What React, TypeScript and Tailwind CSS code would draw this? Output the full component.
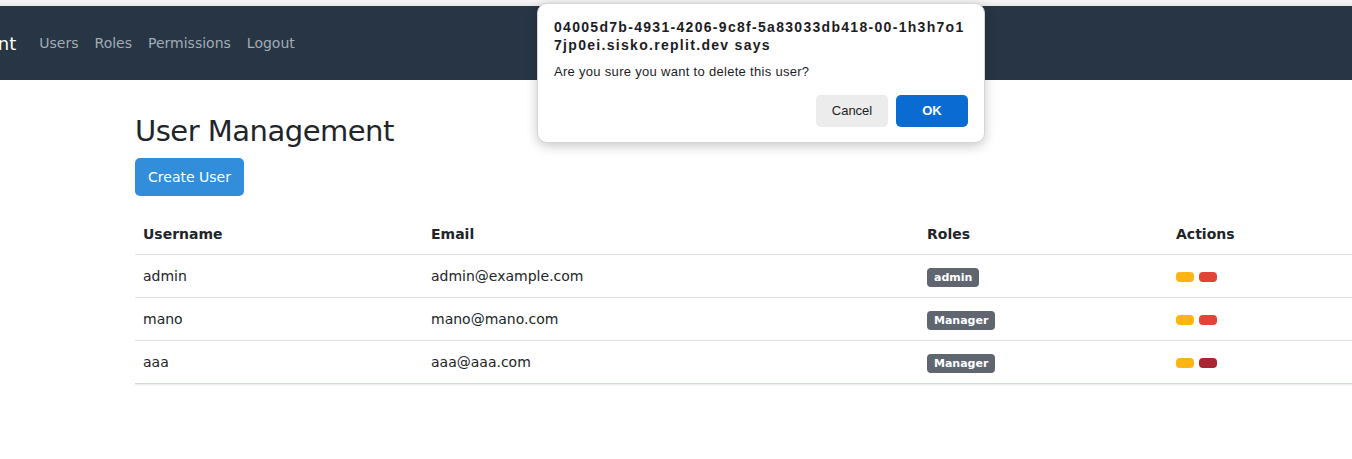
import React from "react";

const users = [
  { username: "admin", email: "admin@example.com", role: "admin", deleteColor: "bg-[#e24537]" },
  { username: "mano", email: "mano@mano.com", role: "Manager", deleteColor: "bg-[#e24537]" },
  { username: "aaa", email: "aaa@aaa.com", role: "Manager", deleteColor: "bg-[#a82633]" },
];

const navLinks = ["Users", "Roles", "Permissions", "Logout"];

function ConfirmDialog() {
  return (
    <div className="absolute left-[537px] top-[3px] w-[448px] rounded-[10px] bg-white border border-[#d6d6d6] shadow-[0_3px_12px_rgba(0,0,0,0.22)] px-4 pt-[14px] pb-[15px] font-['Liberation_Sans',Arial,sans-serif] text-[#1d1d1f]">
      <div className="text-[14px] font-bold leading-[18px] tracking-[1.3px]">
        <div>04005d7b-4931-4206-9c8f-5a83033db418-00-1h3h7o1</div>
        <div>7jp0ei.sisko.replit.dev says</div>
      </div>
      <p className="mt-[10px] text-[13px] leading-[16px] tracking-[0.3px]">
        Are you sure you want to delete this user?
      </p>
      <div className="mt-[15px] flex justify-end gap-2">
        <button className="w-[72px] h-[32px] rounded-[5px] bg-[#ececec] text-[13px] text-[#1d1d1f]">
          Cancel
        </button>
        <button className="w-[72px] h-[32px] rounded-[5px] bg-[#0a6cd2] text-[13px] font-bold text-white">
          OK
        </button>
      </div>
    </div>
  );
}

export default function App() {
  return (
    <div className="relative w-[1352px] h-[459px] overflow-hidden bg-white font-['DejaVu_Sans',Verdana,sans-serif] text-[#212529]">
      {/* browser chrome strip */}
      <div className="h-[6px] bg-gradient-to-b from-[#f6f6f6] to-[#e8e8e8]" />

      {/* Navbar */}
      <nav className="h-[74px] bg-[#273545] flex items-center">
        <span className="ml-[-149px] mr-[15px] text-[18px] text-white whitespace-nowrap">User Management</span>
        <ul className="flex">
          {navLinks.map((link) => (
            <li key={link} className="px-2 text-[14px] text-[#a3abb5]">
              {link}
            </li>
          ))}
        </ul>
      </nav>

      {/* Content */}
      <main className="pl-[135px] pt-[34px]">
        <h1 className="text-[29px] leading-[34px] tracking-[-0.5px]">User Management</h1>
        <button className="mt-[10px] w-[109px] h-[38px] rounded-[5px] bg-[#328ddb] text-white text-[14px]">
          Create User
        </button>

        <table className="mt-[16px] w-[1283px] table-fixed border-collapse text-[14px] text-left">
          <colgroup>
            <col className="w-[288px]" />
            <col className="w-[496px]" />
            <col className="w-[249px]" />
            <col className="w-[250px]" />
          </colgroup>
          <thead>
            <tr className="h-[42px] border-b border-[#dee2e6]">
              <th className="px-2 pt-[3px] font-bold">Username</th>
              <th className="px-2 pt-[3px] font-bold">Email</th>
              <th className="px-2 pt-[3px] font-bold">Roles</th>
              <th className="px-2 pt-[3px] font-bold">Actions</th>
            </tr>
          </thead>
          <tbody>
            {users.map((u, i) => (
              <tr
                key={u.username}
                className={`h-[43px] border-b ${i === users.length - 1 ? "border-[#d3d9e0]" : "border-[#dee2e6]"}`}
              >
                <td className="px-2 pt-[2px]">{u.username}</td>
                <td className="px-2 pt-[2px]">{u.email}</td>
                <td className="px-2 pt-[2px]">
                  <span className="inline-flex items-center h-[19px] px-[7px] rounded-[4px] bg-[#5f6670] text-white text-[11px] font-bold">
                    {u.role}
                  </span>
                </td>
                <td className="px-2 pt-[2px]">
                  <div className="flex gap-[5px]">
                    <span className="block w-[18px] h-[10px] rounded-[4px] bg-[#fdb515]" />
                    <span className={`block w-[18px] h-[10px] rounded-[4px] ${u.deleteColor}`} />
                  </div>
                </td>
              </tr>
            ))}
          </tbody>
        </table>
        <div className="w-[1283px] h-[2px] bg-gradient-to-b from-[#e6e9ed] to-transparent" />
      </main>

      <ConfirmDialog />
    </div>
  );
}
